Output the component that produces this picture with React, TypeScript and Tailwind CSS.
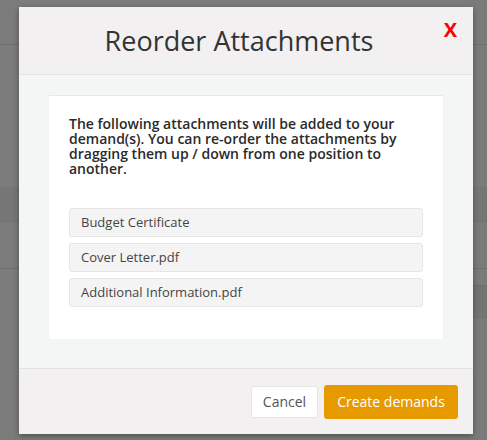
import React from "react";

const items = ["Budget Certificate", "Cover Letter.pdf", "Additional Information.pdf"];

export default function App() {
  return (
    <div
      className="relative w-[487px] h-[440px] overflow-hidden bg-[#7b7b7b]"
      style={{ fontFamily: '"Open Sans", "Noto Sans", sans-serif' }}
    >
      {/* background page under overlay */}
      <div className="flex flex-col">
        <div className="h-[44px]" />
        <div className="h-px bg-[#6e6e6e]" />
        <div className="h-[142px]" />
        <div className="h-[35px] bg-[#767676] border-b border-[#707070]" />
        <div className="h-[46px]" />
        <div className="h-px bg-[#6e6e6e]" />
        <div className="h-[16px]" />
        <div className="ml-auto w-[20px] h-[33px] bg-[#747474] border-y border-[#6e6e6e]" />
      </div>

      {/* modal */}
      <div className="absolute left-[19px] top-[7px] w-[454px] h-[427px] flex flex-col shadow-[0_2px_6px_rgba(0,0,0,0.35)]">
        <div className="relative h-[68px] shrink-0 bg-[#f2f0f1] border-b border-[#e3e3e3] flex items-center justify-center pr-[14px]">
          <h1 className="text-[27px] leading-none text-[#333333] font-normal">Reorder Attachments</h1>
          <span className="absolute right-[16px] top-[9px] text-[20px] font-bold text-[#ff0000] leading-[28px]">X</span>
        </div>
        <div className="flex-1 bg-[#f4f5f5] px-[30px] pt-[20px] pb-[29px] border-b border-[#e3e5e5]">
          <div className="h-full bg-white border-t border-[#e8e8e8] px-[20px] pt-[20px]">
            <p className="text-[14px] leading-[15px] font-semibold text-[#2a2a2a]">
              The following attachments will be added to your demand(s). You can re-order the attachments by dragging them up / down from one position to another.
            </p>
            <div className="mt-[32px] flex flex-col gap-[6px]">
              {items.map((t) => (
                <div
                  key={t}
                  className="h-[29px] flex items-center px-[11px] bg-[#f4f4f4] border border-[#e6e6e6] rounded-[3px] text-[13px] text-[#444444]"
                >
                  {t}
                </div>
              ))}
            </div>
          </div>
        </div>
        <div className="h-[65px] shrink-0 bg-[#f2f0f1] flex items-center justify-end gap-[6px] pr-[15px]">
          <button className="h-[32px] w-[67px] bg-white border border-[#e6e6e6] rounded-[3px] text-[14px] text-[#555555]">
            Cancel
          </button>
          <button className="h-[34px] w-[134px] bg-[#e69a00] rounded-[3px] text-[14px] text-white">
            Create demands
          </button>
        </div>
      </div>
    </div>
  );
}
